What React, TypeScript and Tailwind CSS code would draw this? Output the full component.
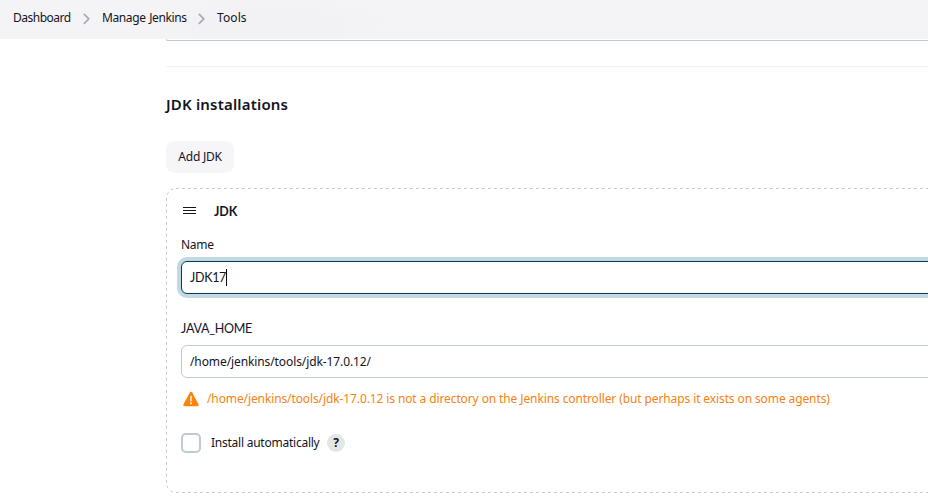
import React from "react";

function Chevron() {
  return (
    <svg className="h-[14px] w-[8px] shrink-0" viewBox="0 0 8 14" fill="none" stroke="#a9a9b8" strokeWidth="1.7" strokeLinecap="round" strokeLinejoin="round">
      <path d="M1.300 2.300 5.800 6.800l-4.500 4.500" />
    </svg>
  );
}

function Breadcrumbs() {
  return (
    <nav className="flex h-[39px] items-start whitespace-nowrap bg-[#f4f4f7] bg-[radial-gradient(ellipse_130px_28px_at_270px_24px,#f2f2f4_45%,transparent_100%)] pl-[13px] pt-[9px] text-[12px] leading-[18px]">
      <a className="w-[70px] tracking-[-0.5px]">Dashboard</a>
      <span className="w-[19px] pt-[3px]"><Chevron /></span>
      <a className="w-[96px] tracking-[-0.4px] [word-spacing:1px]">Manage Jenkins</a>
      <span className="w-[19px] pt-[3px]"><Chevron /></span>
      <a className="tracking-[0.1px]">Tools</a>
    </nav>
  );
}

export default function App() {
  return (
    <div className="h-[499px] w-[928px] overflow-hidden bg-white font-['Noto_Sans',sans-serif] text-[12px] leading-[18px] text-[#14141f]">
      <Breadcrumbs />
      <main className="pl-[166px]">
        <div className="h-[2px] w-[800px] rounded-bl-[4px] border-b border-l border-[#bfcad1]" />
        <hr className="mt-[25px] border-[#f2f2f4]" />
        <h2 className="mt-[26px] h-[22px] whitespace-nowrap text-[15px] font-semibold leading-[22px] tracking-[0.18px]">JDK installations</h2>
        <button className="mt-[26px] flex h-[32px] w-[68px] items-center justify-center rounded-[9px] bg-[#f6f6f9] tracking-[-0.25px]">Add JDK</button>
        <section className="relative mt-[15px] h-[305px] w-[800px] pl-[15px] pt-[14px]">
          <svg className="pointer-events-none absolute left-0 top-0 h-[305px] w-[800px]" fill="none" stroke="#bcc3c8">
            <rect x="0.500" y="0.500" width="799" height="304" rx="9.500" strokeDasharray="2.500 3.500" />
          </svg>
          <header className="flex h-[18px] items-center pl-[2px]">
            <svg className="mb-[2px] h-[9px] w-[13px]" viewBox="0 0 13 9" fill="none" stroke="#14141f">
              <path d="M0 1.500h13M0 4.500h13M0 7.500h13" />
            </svg>
            <h3 className="pl-[18px] pt-px font-['Lato','Noto_Sans',sans-serif] text-[12.500px] font-bold">JDK</h3>
          </header>
          <label className="mt-[16px] block tracking-[-0.3px]">Name</label>
          <div className="mt-[7px] flex h-[33px] w-[790px] items-center rounded-[6px] border border-[#063b56] bg-white pl-[8px] shadow-[0_0_0_4px_#c1d9e5]">
            <span className="w-[36px] font-['Lato','Noto_Sans',sans-serif] text-[12.500px] tracking-[-0.3px]">JDK17</span>
            <span className="h-[17px] w-px bg-black" />
          </div>
          <label className="mt-[26px] block font-['Lato','Noto_Sans',sans-serif] text-[12.500px] tracking-[-0.25px]">JAVA_HOME</label>
          <div className="mt-[7px] flex h-[33px] w-[790px] items-center rounded-[6px] border border-[#bfcad1] pl-[8px]">
            <span className="tracking-[-0.100px]">/home/jenkins/tools/jdk-17.0.12/</span>
          </div>
          <div className="mt-[12px] flex h-[18px] items-center whitespace-nowrap text-[#f58214]">
            <svg className="ml-[2px] mr-[8px] h-[16px] w-[16px]" viewBox="0 0 16 16">
              <path d="M8 .8c.55 0 .95.3 1.200.75l6.300 11.800c.5 1-.1 2-1.200 2H1.700c-1.100 0-1.700-1-1.200-2L6.800 1.550C7.050 1.100 7.450.8 8 .8Z" fill="#ff820a" />
              <path d="M8 5.500v4.200" stroke="white" strokeWidth="1.500" strokeLinecap="round" />
              <circle cx="8" cy="12.300" r="1" fill="white" />
            </svg>
            <span className="tracking-[-0.110px]">/home/jenkins/tools/jdk-17.0.12 is not a directory on the Jenkins controller (but perhaps it exists on some agents)</span>
          </div>
          <div className="mt-[25px] flex h-[20px] items-center">
            <span className="h-[20px] w-[20px] rounded-[5px] border-2 border-[#bfcad1]" />
            <span className="w-[116px] whitespace-nowrap pl-[10px] tracking-[-0.240px]">Install automatically</span>
            <span className="ml-[10px] flex h-[18px] w-[18px] items-center justify-center rounded-full bg-[#e5e5e6] font-bold">?</span>
          </div>
        </section>
      </main>
    </div>
  );
}
